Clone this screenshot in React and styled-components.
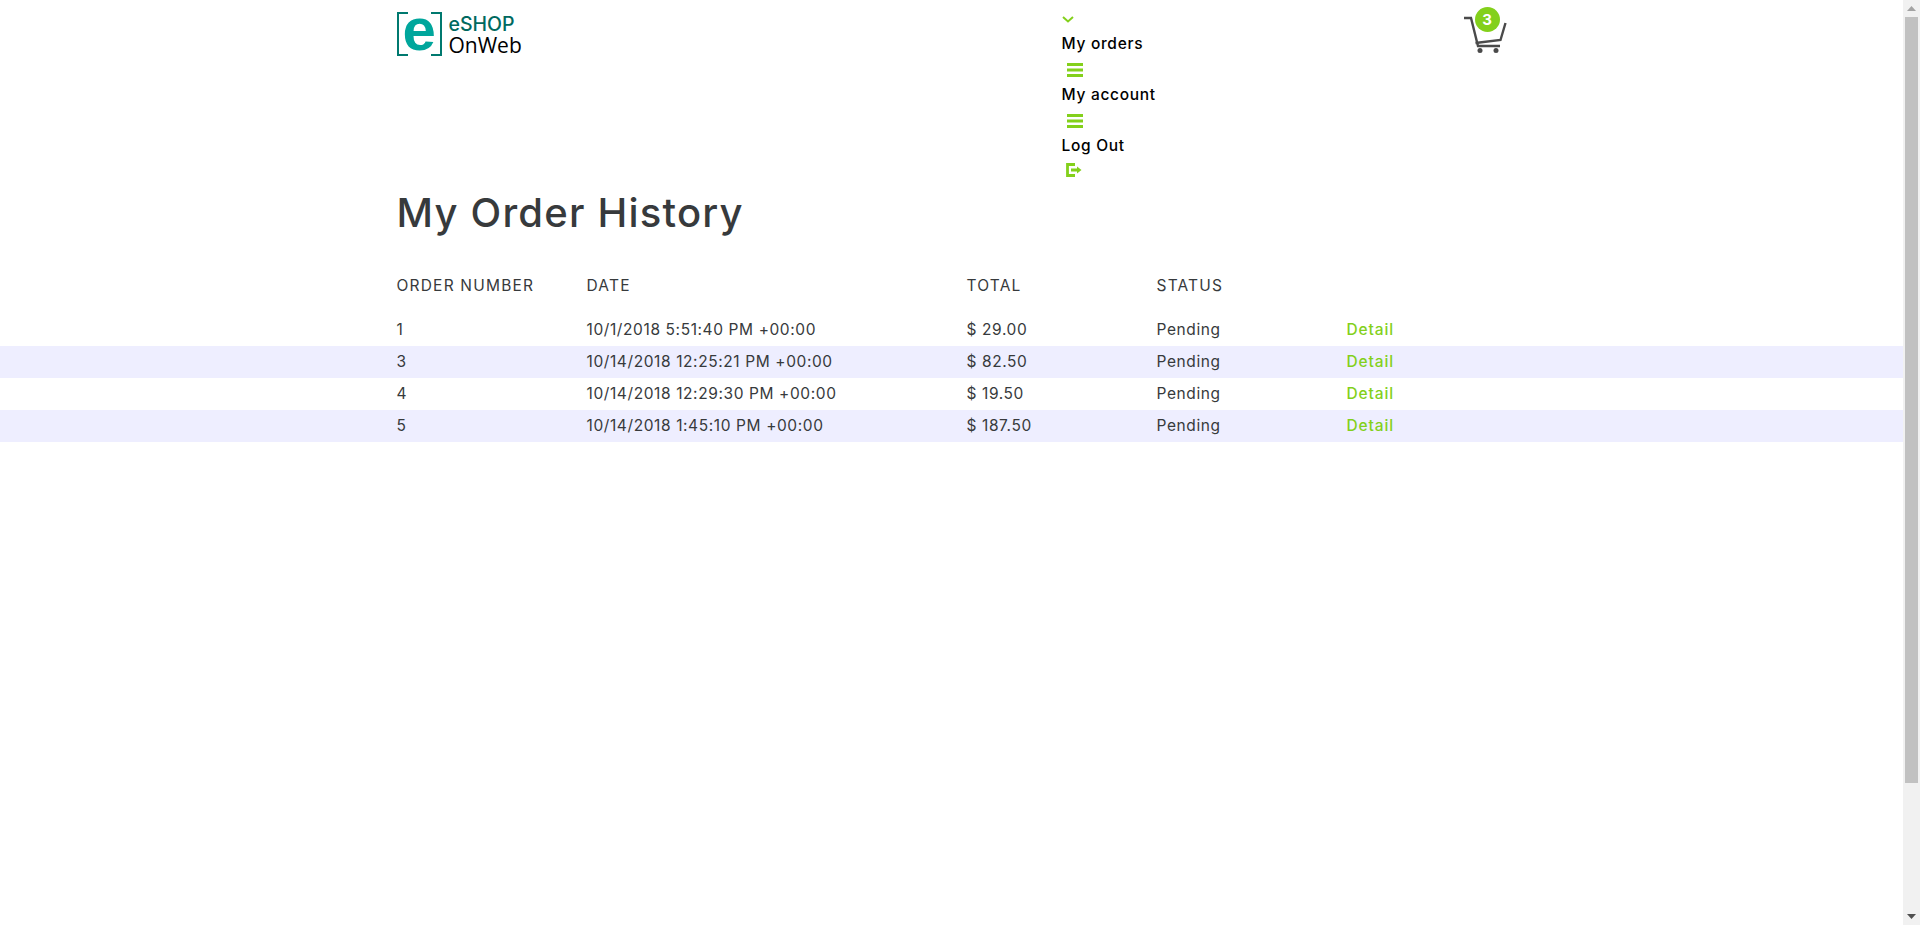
import React from "react";
import styled, { createGlobalStyle } from "styled-components";

const GlobalStyle = createGlobalStyle`
  body {
    margin: 0;
    background: #fff;
    font-family: Inter, "Open Sans", sans-serif;
    font-size: 15.5px;
    letter-spacing: 0.6px;
    color: #373a3c;
  }
`;

const Page = styled.div`
  display: flex;
  height: 100vh;
  overflow: hidden;
`;

const Main = styled.main`
  flex: 1;
  min-width: 0;
`;

// the browser's own scrollbar is hidden when photographed, so it is drawn here
const Rail = styled.div`
  display: flex;
  flex-direction: column;
  width: 17px;
  background: #f1f1f1;
`;

const RailButton = styled.div`
  display: flex;
  align-items: center;
  justify-content: center;
  height: 17px;
`;

const RailThumb = styled.div`
  height: 766px;
  margin: 0 2px;
  background: #c1c1c1;
`;

const RailSpacer = styled.div`
  flex: 1;
`;

const Container = styled.div`
  width: 1110px;
  margin: 0 auto;
`;

const Header = styled.header`
  height: 185px;
`;

const HeaderInner = styled(Container)`
  display: grid;
  grid-template-columns: 665px 402px 43px;
`;

const Logo = styled.div`
  display: flex;
  gap: 7px;
  padding-top: 12px;
`;

const LogoMark = styled.svg`
  display: block;
  overflow: visible;
  flex: none;
`;

const LogoText = styled.div`
  display: flex;
  flex-direction: column;
  padding-top: 3px;
  letter-spacing: 0;
`;

const LogoTop = styled.span`
  font-size: 19.500px;
  font-weight: 500;
  line-height: 19px;
  color: #00695f;
`;

const LogoBottom = styled.span`
  font-family: "Open Sans", sans-serif;
  font-size: 21px;
  font-weight: 400;
  line-height: 22px;
  color: #000;
`;

const Nav = styled.nav`
  display: flex;
  flex-direction: column;
  padding-top: 16px;
`;

const NavItem = styled.div`
  display: flex;
  flex-direction: column;
  height: 51px;
`;

const NavLabel = styled.a`
  font-size: 15.5px;
  font-weight: 500;
  line-height: 20px;
  letter-spacing: 0.7px;
  color: #000;
`;

const NavIcon = styled.svg`
  display: block;
  width: 18px;
  height: 16px;
  margin-top: ${(props) => props.$top || 8}px;
  margin-left: ${(props) => props.$left || 4}px;
  fill: none;
  stroke: #83d01b;
`;

const Chevron = styled.svg`
  display: block;
  width: 12px;
  height: 7px;
  margin-bottom: 11px;
  fill: none;
  stroke: #83d01b;
  stroke-width: 2;
`;

const Cart = styled.div`
  position: relative;
  height: 56px;
  padding-top: 12px;
`;

const CartIcon = styled.svg`
  display: block;
  width: 44px;
  height: 44px;
`;

const Badge = styled.span`
  position: absolute;
  top: 7px;
  left: 11px;
  width: 25px;
  height: 25px;
  border-radius: 50%;
  background: #83d01b;
  color: #fff;
  font-size: 15px;
  font-weight: 700;
  line-height: 25px;
  text-align: center;
  letter-spacing: 0;
`;

const Title = styled.h1`
  margin: 0;
  padding-bottom: 32px;
  font-size: 40px;
  font-weight: 500;
  line-height: 56px;
  letter-spacing: 1.2px;
  color: #373a3c;
`;

const Columns = styled(Container)`
  display: grid;
  grid-template-columns: 190px 380px 190px 190px 1fr;
  align-items: center;
  box-sizing: border-box;
  height: 32px;
  padding-bottom: 1px;
`;

const HeadRow = styled(Columns)`
  height: 24px;
  margin-bottom: 17px;
  padding-bottom: 0;
  text-transform: uppercase;
  letter-spacing: 1.2px;
`;

const Row = styled.div`
  background: ${(props) => (props.$shaded ? "#eeeeff" : "transparent")};
`;

const DetailLink = styled.a`
  color: #83d01b;
  font-weight: 500;
  letter-spacing: 0.9px;
`;

const orders = [
  { id: 1, date: "10/1/2018 5:51:40 PM +00:00", total: "$ 29.00" },
  { id: 3, date: "10/14/2018 12:25:21 PM +00:00", total: "$ 82.50" },
  { id: 4, date: "10/14/2018 12:29:30 PM +00:00", total: "$ 19.50" },
  { id: 5, date: "10/14/2018 1:45:10 PM +00:00", total: "$ 187.50" },
];

const MenuBars = () => (
  <NavIcon viewBox="0 0 18 16" strokeWidth="3">
    <path d="M1 2.500h16M1 8h16M1 13.500h16" />
  </NavIcon>
);

export default function App() {
  return (
    <Page>
      <GlobalStyle />
      <Main>
        <Header>
          <HeaderInner>
            <Logo>
              <LogoMark width="45" height="44" viewBox="0 0 45 44">
                <path d="M11 1H1v42h10M34 1h10v42H34" fill="none" stroke="#00796f" strokeWidth="2" />
                <text x="5.500" y="38" fontFamily="Liberation Sans" fontWeight="700" fontSize="60" fill="#00a69c">e</text>
              </LogoMark>
              <LogoText>
                <LogoTop>eSHOP</LogoTop>
                <LogoBottom>OnWeb</LogoBottom>
              </LogoText>
            </Logo>
            <Nav>
              <Chevron viewBox="0 0 12 7"><path d="M1 1l5 4.500L11 1" /></Chevron>
              <NavItem>
                <NavLabel>My orders</NavLabel>
                <MenuBars />
              </NavItem>
              <NavItem>
                <NavLabel>My account</NavLabel>
                <MenuBars />
              </NavItem>
              <NavItem>
                <NavLabel>Log Out</NavLabel>
                <NavIcon viewBox="0 0 18 16" strokeWidth="2.8" $top={6} $left={3}>
                  <path d="M10 2.500H2.500v11H10" />
                  <path d="M6 8h6" strokeWidth="3" />
                  <path d="M12 4.500l4.500 3.500-4.500 3.500z" fill="#83d01b" strokeWidth="0" />
                </NavIcon>
              </NavItem>
            </Nav>
            <Cart>
              <CartIcon viewBox="0 0 44 44" fill="none" stroke="#4a4a4a" strokeWidth="2.4">
                <path d="M0 6h7l7 28h22" />
                <path d="M41.500 11l-5 17-25 3" />
                <circle cx="16" cy="38.500" r="2.500" fill="#4a4a4a" stroke="none" />
                <circle cx="32" cy="38.500" r="2.500" fill="#4a4a4a" stroke="none" />
              </CartIcon>
              <Badge>3</Badge>
            </Cart>
          </HeaderInner>
        </Header>
        <Container>
          <Title>My Order History</Title>
        </Container>
        <HeadRow>
          <span>Order number</span>
          <span>Date</span>
          <span>Total</span>
          <span>Status</span>
          <span />
        </HeadRow>
        {orders.map((order, index) => (
          <Row key={order.id} $shaded={index % 2 === 1}>
            <Columns>
              <span>{order.id}</span>
              <span>{order.date}</span>
              <span>{order.total}</span>
              <span>Pending</span>
              <DetailLink>Detail</DetailLink>
            </Columns>
          </Row>
        ))}
      </Main>
      <Rail>
        <RailButton>
          <svg width="9" height="5" viewBox="0 0 9 5"><path d="M4.500 0L9 5H0z" fill="#a3a3a3" /></svg>
        </RailButton>
        <RailThumb />
        <RailSpacer />
        <RailButton>
          <svg width="9" height="5" viewBox="0 0 9 5"><path d="M4.500 5L9 0H0z" fill="#505050" /></svg>
        </RailButton>
      </Rail>
    </Page>
  );
}
